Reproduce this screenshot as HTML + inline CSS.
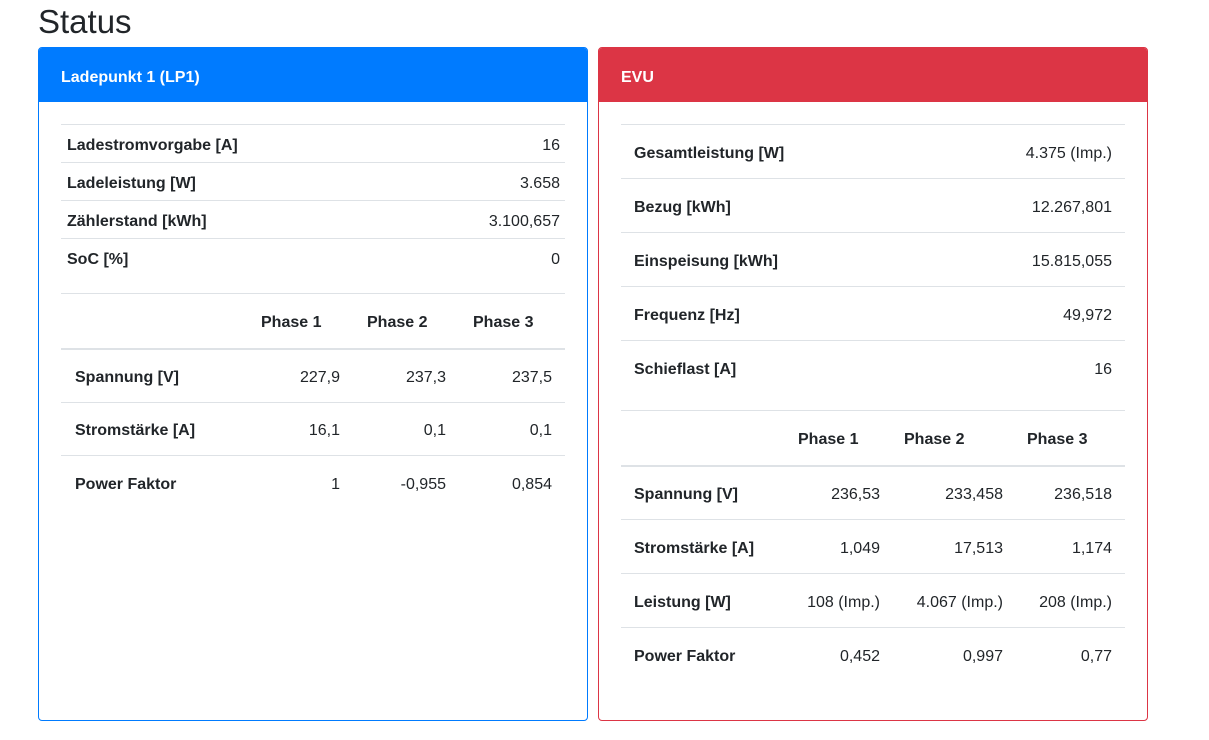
<!DOCTYPE html>
<html><head><meta charset="utf-8"><style>
*{box-sizing:border-box;margin:0;padding:0}
body{width:1209px;height:740px;background:#fff;font-family:"Liberation Sans",Arial,sans-serif;color:#212529;font-size:16px;position:relative;overflow:hidden}
h1{position:absolute;left:38px;top:2px;font-size:33px;font-weight:400;line-height:40px}
.card{position:absolute;top:47px;width:550px;height:674px;border:1px solid;border-radius:4px;overflow:hidden}
.hd{height:54px;color:#fff;font-weight:bold;font-size:16px;padding-left:22px;padding-top:3px;line-height:54px}
table{border-collapse:collapse;position:absolute;table-layout:fixed}
td,th{border-top:1px solid #dee2e6;white-space:nowrap;padding-top:4px}
th{text-align:left;font-weight:bold}
.r{text-align:right}
thead th{border-bottom:2px solid #dee2e6}
</style></head><body>
<h1>Status</h1>
<div class="card" style="left:38px;border-color:#007bff">
<div class="hd" style="background:#007bff">Ladepunkt 1 (LP1)</div>
<table style="left:22px;top:76px;width:504px">
<tr style="height:38px"><th style="padding-left:6px">Ladestromvorgabe [A]</th><td class="r" style="padding-right:5px">16</td></tr>
<tr style="height:38px"><th style="padding-left:6px">Ladeleistung [W]</th><td class="r" style="padding-right:5px">3.658</td></tr>
<tr style="height:38px"><th style="padding-left:6px">Zählerstand [kWh]</th><td class="r" style="padding-right:5px">3.100,657</td></tr>
<tr style="height:38px"><th style="padding-left:6px">SoC [%]</th><td class="r" style="padding-right:5px">0</td></tr>
</table>
<table style="left:22px;top:245px;width:504px">
<colgroup><col style="width:186px"><col style="width:106px"><col style="width:106px"><col style="width:106px"></colgroup>
<thead><tr style="height:55px"><th></th><th style="padding-left:14px">Phase 1</th><th style="padding-left:14px">Phase 2</th><th style="padding-left:14px">Phase 3</th></tr></thead>
<tr style="height:54px"><th style="padding-left:14px">Spannung [V]</th><td class="r" style="padding-right:13px">227,9</td><td class="r" style="padding-right:13px">237,3</td><td class="r" style="padding-right:13px">237,5</td></tr>
<tr style="height:53px"><th style="padding-left:14px">Stromstärke [A]</th><td class="r" style="padding-right:13px">16,1</td><td class="r" style="padding-right:13px">0,1</td><td class="r" style="padding-right:13px">0,1</td></tr>
<tr style="height:54px"><th style="padding-left:14px">Power Faktor</th><td class="r" style="padding-right:13px">1</td><td class="r" style="padding-right:13px">-0,955</td><td class="r" style="padding-right:13px">0,854</td></tr>
</table>
</div>
<div class="card" style="left:598px;border-color:#dc3545">
<div class="hd" style="background:#dc3545">EVU</div>
<table style="left:22px;top:76px;width:504px">
<tr style="height:54px"><th style="padding-left:13px">Gesamtleistung [W]</th><td class="r" style="padding-right:13px">4.375 (Imp.)</td></tr>
<tr style="height:54px"><th style="padding-left:13px">Bezug [kWh]</th><td class="r" style="padding-right:13px">12.267,801</td></tr>
<tr style="height:54px"><th style="padding-left:13px">Einspeisung [kWh]</th><td class="r" style="padding-right:13px">15.815,055</td></tr>
<tr style="height:54px"><th style="padding-left:13px">Frequenz [Hz]</th><td class="r" style="padding-right:13px">49,972</td></tr>
<tr style="height:54px"><th style="padding-left:13px">Schieflast [A]</th><td class="r" style="padding-right:13px">16</td></tr>
</table>
<table style="left:22px;top:362px;width:504px">
<colgroup><col style="width:162px"><col style="width:109px"><col style="width:123px"><col style="width:110px"></colgroup>
<thead><tr style="height:55px"><th></th><th style="padding-left:15px">Phase 1</th><th style="padding-left:12px">Phase 2</th><th style="padding-left:12px">Phase 3</th></tr></thead>
<tr style="height:54px"><th style="padding-left:13px">Spannung [V]</th><td class="r" style="padding-right:12px">236,53</td><td class="r" style="padding-right:12px">233,458</td><td class="r" style="padding-right:13px">236,518</td></tr>
<tr style="height:54px"><th style="padding-left:13px">Stromstärke [A]</th><td class="r" style="padding-right:12px">1,049</td><td class="r" style="padding-right:12px">17,513</td><td class="r" style="padding-right:13px">1,174</td></tr>
<tr style="height:54px"><th style="padding-left:13px">Leistung [W]</th><td class="r" style="padding-right:12px">108 (Imp.)</td><td class="r" style="padding-right:12px">4.067 (Imp.)</td><td class="r" style="padding-right:13px">208 (Imp.)</td></tr>
<tr style="height:54px"><th style="padding-left:13px">Power Faktor</th><td class="r" style="padding-right:12px">0,452</td><td class="r" style="padding-right:12px">0,997</td><td class="r" style="padding-right:13px">0,77</td></tr>
</table>
</div>
</body></html>
